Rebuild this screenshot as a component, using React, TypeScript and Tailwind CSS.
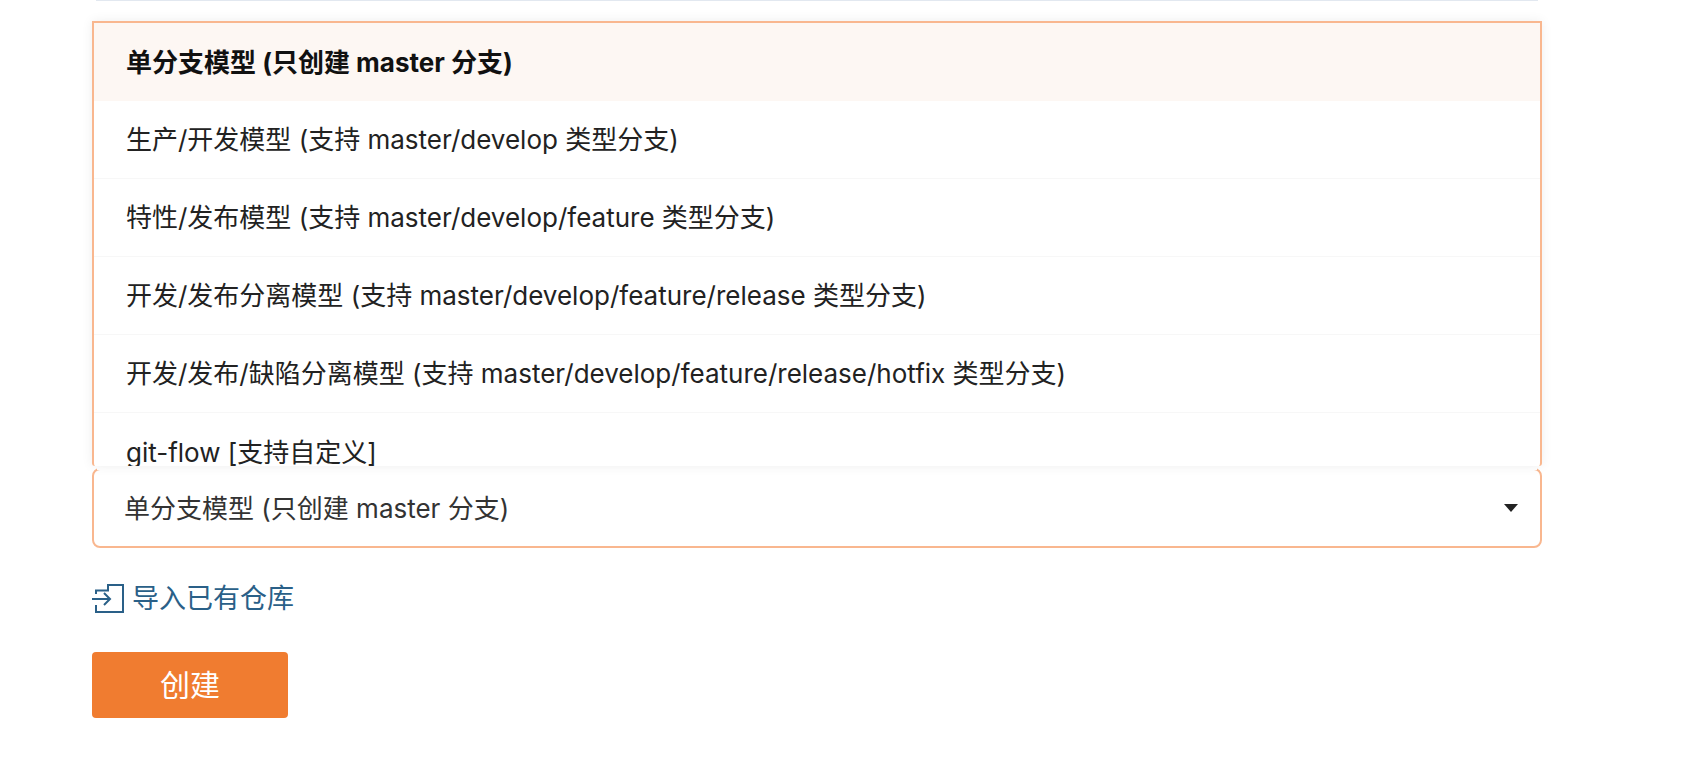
import React from 'react';

const font = { fontFamily: 'Inter, "Noto Sans CJK SC", sans-serif' };

const options = [
  '生产/开发模型 (支持 master/develop 类型分支)',
  '特性/发布模型 (支持 master/develop/feature 类型分支)',
  '开发/发布分离模型 (支持 master/develop/feature/release 类型分支)',
  '开发/发布/缺陷分离模型 (支持 master/develop/feature/release/hotfix 类型分支)',
];

export default function App() {
  return (
    <div className="h-[782px] overflow-hidden bg-white pl-[92px] font-['Inter','Noto_Sans_CJK_SC',sans-serif]">
      <div className="w-[1450px]">
        {/* strip of the field above */}
        <div className="mx-[4px] h-[1px] bg-[#e2e8f0]" />

        {/* open menu */}
        <div className="relative z-10 mt-[20px] h-[445px] overflow-hidden rounded-b-[3px] border-x-2 border-t-2 border-[#f9b78f] bg-white shadow-[0_0_12px_rgba(0,0,0,0.07)]">
          <div className="flex h-[78px] items-center bg-[#fdf7f3] pl-[32px] text-[26px] font-bold text-[#111111]">
            单分支模型 (只创建 master 分支)
          </div>
          {options.map((label) => (
            <div key={label} className="flex h-[78px] items-center border-b border-[#f7f7f7] pl-[32px] text-[26px] text-[#222222]">
              {label}
            </div>
          ))}
          <div className="flex h-[78px] items-center pl-[32px] text-[26px] text-[#222222]">git-flow [支持自定义]</div>
        </div>

        {/* select */}
        <div className="relative mt-[2px] flex h-[80px] items-center justify-between rounded-[8px] border-2 border-[#f9b78f] pl-[30px] pr-[22px] text-[26px] text-[#333333]">
          <div className="absolute -top-[2px] left-[3px] right-[3px] h-[2px] bg-white" />
          <span>单分支模型 (只创建 master 分支)</span>
          <div className="h-0 w-0 border-x-[7px] border-t-[8px] border-x-transparent border-t-[#222222]" />
        </div>

        {/* import link */}
        <div className="mt-[31px] flex h-[40px] items-center text-[27px] text-[#2a6088]">
          <svg width="32" height="30" viewBox="0 0 32 30" fill="none" stroke="#2a6088" strokeWidth="2" className="mr-[8px]">
            <path d="M4 10V6.5h12V1h15v27H4v-7" />
            <path d="M0 15h17M12 9l6 6-6 6" />
          </svg>
          <span>导入已有仓库</span>
        </div>

        {/* submit */}
        <button className="mt-[33px] flex h-[66px] w-[196px] items-center justify-center rounded-[4px] bg-[#f07c30] text-[30px] text-white" style={font}>
          创建
        </button>
      </div>
    </div>
  );
}
